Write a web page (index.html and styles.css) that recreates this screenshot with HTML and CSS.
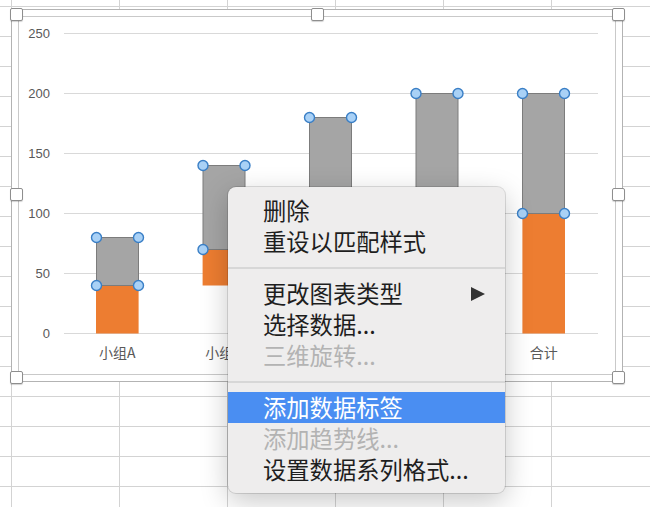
FILE: index.html
```html
<!DOCTYPE html>
<html lang="zh-CN">
<head>
<meta charset="utf-8">
<title>图表</title>
<link rel="stylesheet" href="styles.css">
</head>
<body>
<div class="sheet">
  <div class="chart">
    <div class="plot">
      <svg class="plot-svg" width="596" height="357" viewBox="19 17 596 357" xmlns="http://www.w3.org/2000/svg">
        <g class="grid">
          <line x1="64" y1="33.5" x2="598" y2="33.5"/>
          <line x1="64" y1="93.5" x2="598" y2="93.5"/>
          <line x1="64" y1="153.5" x2="598" y2="153.5"/>
          <line x1="64" y1="213.5" x2="598" y2="213.5"/>
          <line x1="64" y1="273.5" x2="598" y2="273.5"/>
          <line x1="64" y1="333.5" x2="598" y2="333.5"/>
        </g>
        <g class="ylab">
          <text x="50" y="38">250</text>
          <text x="50" y="98">200</text>
          <text x="50" y="158">150</text>
          <text x="50" y="218">100</text>
          <text x="50" y="278">50</text>
          <text x="50" y="338">0</text>
        </g>
        <g class="orange">
          <rect x="96" y="285.5" width="42.6" height="48"/>
          <rect x="202.6" y="249.5" width="42.6" height="36"/>
          <rect x="309.2" y="213.5" width="42.6" height="36"/>
          <rect x="415.8" y="201.5" width="42.6" height="12"/>
          <rect x="522.4" y="213.5" width="42.6" height="120"/>
        </g>
        <g class="gray">
          <rect x="96.5" y="237.5" width="42" height="48"/>
          <rect x="203" y="165.5" width="42" height="84"/>
          <rect x="309.5" y="117.5" width="42" height="96"/>
          <rect x="416" y="93.5" width="42" height="108"/>
          <rect x="522.5" y="93.5" width="42" height="120"/>
        </g>
        <g class="pts">
          <circle cx="96.5" cy="237.5" r="5"/><circle cx="138.5" cy="237.5" r="5"/>
          <circle cx="96.5" cy="285.5" r="5"/><circle cx="138.5" cy="285.5" r="5"/>
          <circle cx="203" cy="165.5" r="5"/><circle cx="245" cy="165.5" r="5"/>
          <circle cx="203" cy="249.5" r="5"/><circle cx="245" cy="249.5" r="5"/>
          <circle cx="309.5" cy="117.5" r="5"/><circle cx="351.5" cy="117.5" r="5"/>
          <circle cx="309.5" cy="213.5" r="5"/><circle cx="351.5" cy="213.5" r="5"/>
          <circle cx="416" cy="93.5" r="5"/><circle cx="458" cy="93.5" r="5"/>
          <circle cx="416" cy="201.5" r="5"/><circle cx="458" cy="201.5" r="5"/>
          <circle cx="522.5" cy="93.5" r="5"/><circle cx="564.5" cy="93.5" r="5"/>
          <circle cx="522.5" cy="213.5" r="5"/><circle cx="564.5" cy="213.5" r="5"/>
        </g>
        <g class="xlab">
          <text x="117.3" y="358">小组A</text>
          <text x="223.9" y="358">小组B</text>
          <text x="543.7" y="358">合计</text>
        </g>
      </svg>
    </div>
    <span class="handle h-top h-left"></span>
    <span class="handle h-top h-center"></span>
    <span class="handle h-top h-right"></span>
    <span class="handle h-middle h-left"></span>
    <span class="handle h-middle h-right"></span>
    <span class="handle h-bottom h-left"></span>
    <span class="handle h-bottom h-center"></span>
    <span class="handle h-bottom h-right"></span>
  </div>

  <div class="menu">
    <div class="item">删除</div>
    <div class="item">重设以匹配样式</div>
    <div class="sep"></div>
    <div class="item">更改图表类型
      <svg class="arrow" width="14" height="14" viewBox="0 0 14 14"><polygon points="0,0 14,7 0,14"/></svg>
    </div>
    <div class="item">选择数据...</div>
    <div class="item disabled">三维旋转...</div>
    <div class="sep"></div>
    <div class="item active">添加数据标签</div>
    <div class="item disabled">添加趋势线...</div>
    <div class="item">设置数据系列格式...</div>
  </div>
</div>
</body>
</html>
```

FILE: styles.css
```css
html, body {
  margin: 0;
  padding: 0;
}

body {
  width: 650px;
  height: 507px;
  overflow: hidden;
  background-color: #ffffff;
  background-image:
    linear-gradient(to right, #d3d3d3 1px, transparent 1px),
    linear-gradient(to bottom, #d3d3d3 1px, transparent 1px);
  background-size: 108px 30px;
  background-position: 11px 6px;
  font-family: "Noto Sans CJK SC", "Noto Sans", sans-serif;
}

.sheet {
  position: relative;
  width: 650px;
  height: 507px;
}

/* floating chart object */
.chart {
  position: absolute;
  left: 11px;
  top: 9px;
  width: 612px;
  height: 373px;
  box-sizing: border-box;
  border: 1px solid #b3b3b3;
  padding: 6px;
  background: #ffffff;
}

.plot {
  box-sizing: border-box;
  height: 100%;
  border: 1px solid #c9c9c9;
}

.plot-svg {
  display: block;
}

.grid line {
  stroke: #d9d9d9;
  stroke-width: 1;
}

.ylab text {
  font-family: "Liberation Sans", Arial, sans-serif;
  font-size: 13px;
  fill: #595959;
  text-anchor: end;
}

.xlab text {
  font-family: "Noto Sans CJK SC", sans-serif;
  font-size: 14px;
  fill: #595959;
  text-anchor: middle;
}

.orange rect {
  fill: #ed7d31;
}

.gray rect {
  fill: #a5a5a5;
  stroke: #7c7c7c;
  stroke-width: 1;
}

.pts circle {
  fill: #a9d1f6;
  stroke: #3a7fc6;
  stroke-width: 1.4;
}

/* selection handles */
.handle {
  position: absolute;
  width: 13px;
  height: 13px;
  box-sizing: border-box;
  background: #ffffff;
  border: 1px solid #8e8e8e;
  border-radius: 2px;
  box-shadow: 0 1px 1px rgba(0, 0, 0, 0.18);
}

.h-top { top: -2px; }
.h-middle { top: calc(50% - 8px); }
.h-bottom { top: calc(100% - 10px); }
.h-left { left: -2px; }
.h-center { left: calc(50% - 6.5px); }
.h-right { left: calc(100% - 10px); }

/* context menu */
.menu {
  position: absolute;
  left: 228px;
  top: 187px;
  width: 277px;
  box-sizing: border-box;
  padding: 8px 0;
  background: #eeeded;
  border-radius: 8px;
  box-shadow: 0 0 0 1px rgba(0, 0, 0, 0.12), 0 8px 28px rgba(0, 0, 0, 0.22);
}

.item {
  display: flex;
  align-items: center;
  justify-content: space-between;
  height: 31px;
  line-height: 31px;
  padding: 0 20px 0 35px;
  font-size: 23.3px;
  color: #1e1e1e;
  white-space: nowrap;
}

.item.disabled {
  color: #b3b3b3;
}

.item.active {
  background: #4a8ef2;
  color: #ffffff;
}

.arrow {
  display: block;
  fill: #333333;
}

.sep {
  height: 2px;
  margin: 9.5px 0;
  background: #d7d7d7;
}
```
